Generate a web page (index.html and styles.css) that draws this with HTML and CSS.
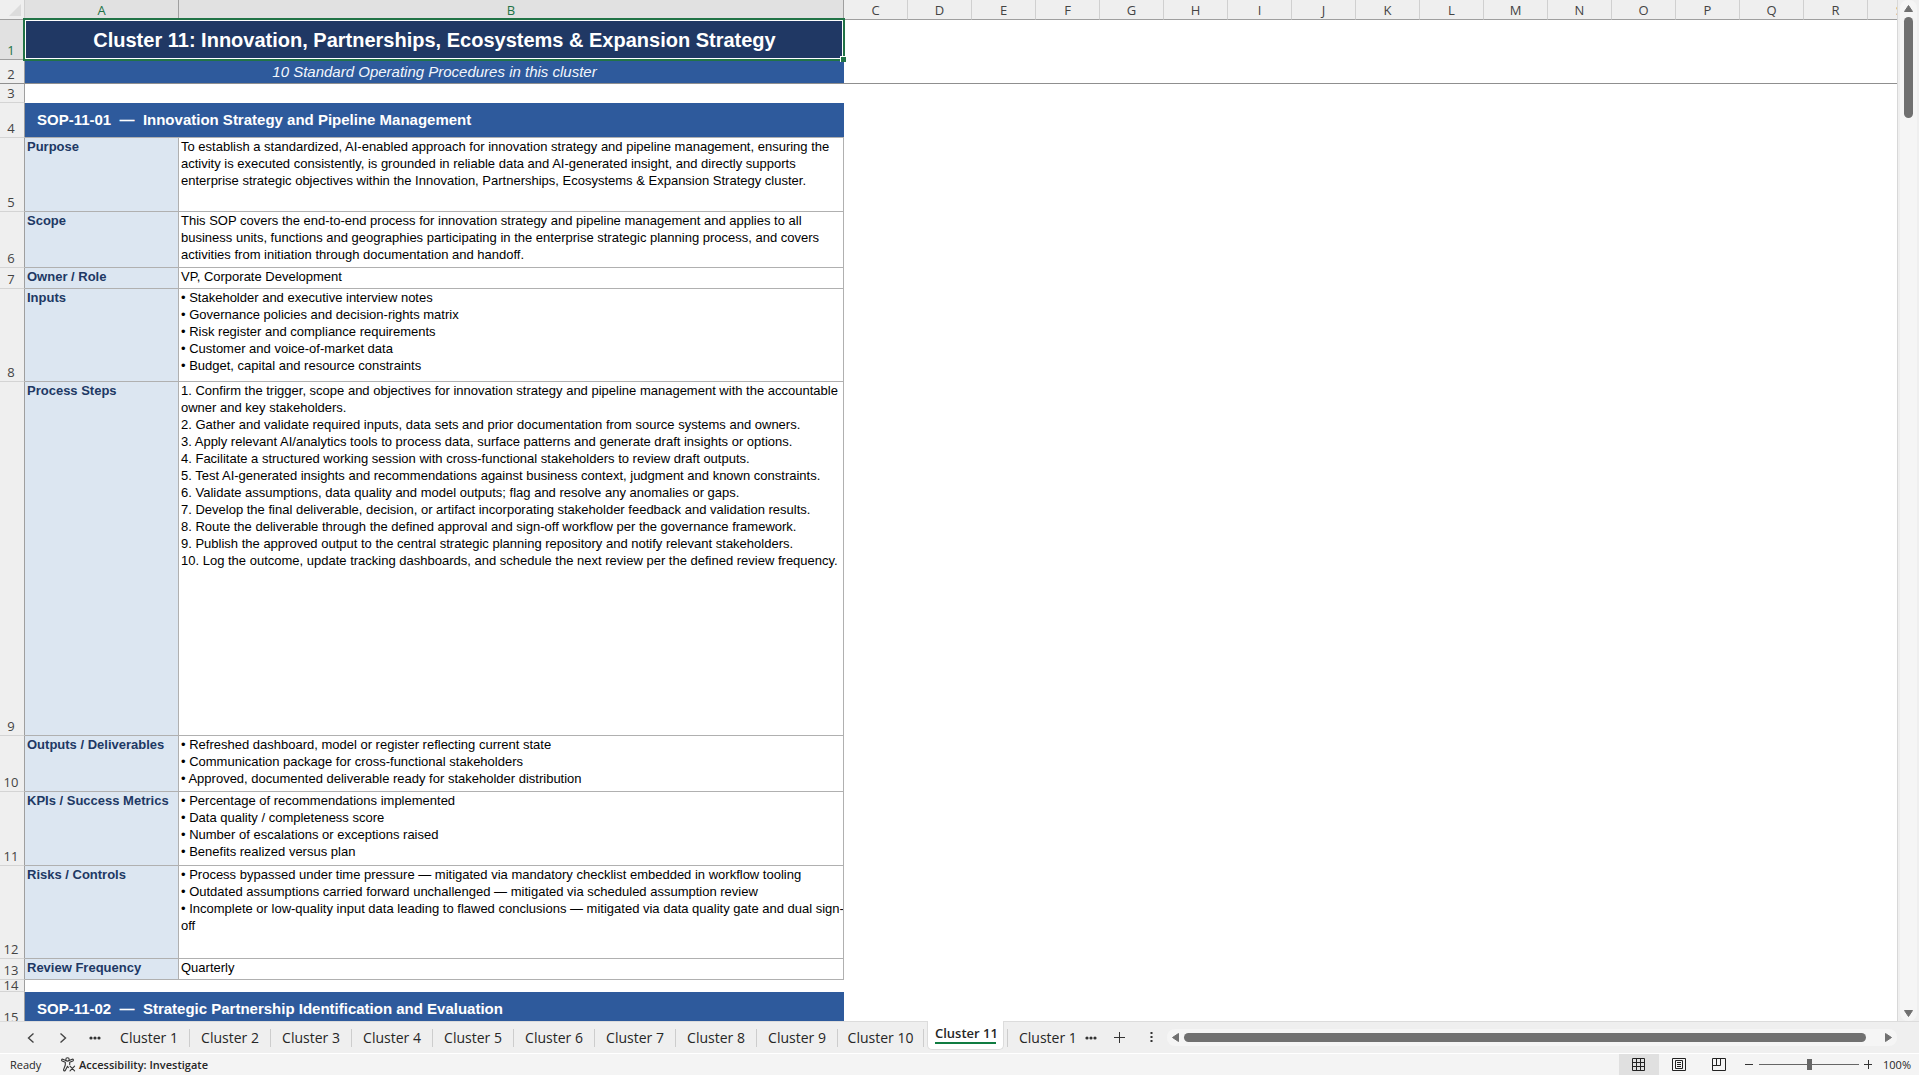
FILE: index.html
```html
<!DOCTYPE html>
<html lang="en">
<head>
<meta charset="utf-8">
<title>Cluster 11</title>
<link rel="stylesheet" href="styles.css">
</head>
<body>
<main class="workbook">
  <div class="viewport">
    <table class="sheet">
      <colgroup>
        <col class="col-head"><col class="col-a"><col class="col-b">
        <col class="col-std" span="17">
      </colgroup>
      <thead>
        <tr>
          <th class="corner"><svg width="12" height="12" viewBox="0 0 12 12"><path d="M12 0v12H0z" fill="#dcdcdc"/></svg></th>
          <th class="active">A</th><th class="active">B</th>
          <th>C</th><th>D</th><th>E</th><th>F</th><th>G</th><th>H</th><th>I</th><th>J</th><th>K</th><th>L</th><th>M</th><th>N</th><th>O</th><th>P</th><th>Q</th><th>R</th><th>S</th>
        </tr>
      </thead>
      <tbody>
        <tr class="h40"><th class="active">1</th><td class="title" colspan="2">Cluster 11: Innovation, Partnerships, Ecosystems &amp; Expansion Strategy<span class="selection"><i class="fill-handle"></i></span></td><td colspan="17"></td></tr>
        <tr class="h24 frozen"><th>2</th><td class="subtitle" colspan="2">10 Standard Operating Procedures in this cluster</td><td colspan="17"></td></tr>
        <tr class="h19"><th>3</th><td colspan="19"></td></tr>
        <tr class="h35"><th>4</th><td class="section" colspan="2">SOP-11-01&nbsp; —&nbsp; Innovation Strategy and Pipeline Management</td><td colspan="17"></td></tr>
        <tr class="h74"><th>5</th><td class="label">Purpose</td><td class="value">To establish a standardized, AI-enabled approach for innovation strategy and pipeline management, ensuring the<br>activity is executed consistently, is grounded in reliable data and AI-generated insight, and directly supports<br>enterprise strategic objectives within the Innovation, Partnerships, Ecosystems &amp; Expansion Strategy cluster.</td><td colspan="17"></td></tr>
        <tr class="h56"><th>6</th><td class="label">Scope</td><td class="value">This SOP covers the end-to-end process for innovation strategy and pipeline management and applies to all<br>business units, functions and geographies participating in the enterprise strategic planning process, and covers<br>activities from initiation through documentation and handoff.</td><td colspan="17"></td></tr>
        <tr class="h21"><th>7</th><td class="label">Owner / Role</td><td class="value">VP, Corporate Development</td><td colspan="17"></td></tr>
        <tr class="h93"><th>8</th><td class="label">Inputs</td><td class="value">• Stakeholder and executive interview notes<br>• Governance policies and decision-rights matrix<br>• Risk register and compliance requirements<br>• Customer and voice-of-market data<br>• Budget, capital and resource constraints</td><td colspan="17"></td></tr>
        <tr class="h354"><th>9</th><td class="label">Process Steps</td><td class="value">1. Confirm the trigger, scope and objectives for innovation strategy and pipeline management with the accountable<br>owner and key stakeholders.<br>2. Gather and validate required inputs, data sets and prior documentation from source systems and owners.<br>3. Apply relevant AI/analytics tools to process data, surface patterns and generate draft insights or options.<br>4. Facilitate a structured working session with cross-functional stakeholders to review draft outputs.<br>5. Test AI-generated insights and recommendations against business context, judgment and known constraints.<br>6. Validate assumptions, data quality and model outputs; flag and resolve any anomalies or gaps.<br>7. Develop the final deliverable, decision, or artifact incorporating stakeholder feedback and validation results.<br>8. Route the deliverable through the defined approval and sign-off workflow per the governance framework.<br>9. Publish the approved output to the central strategic planning repository and notify relevant stakeholders.<br>10. Log the outcome, update tracking dashboards, and schedule the next review per the defined review frequency.</td><td colspan="17"></td></tr>
        <tr class="h56"><th>10</th><td class="label">Outputs / Deliverables</td><td class="value">• Refreshed dashboard, model or register reflecting current state<br>• Communication package for cross-functional stakeholders<br>• Approved, documented deliverable ready for stakeholder distribution</td><td colspan="17"></td></tr>
        <tr class="h74"><th>11</th><td class="label">KPIs / Success Metrics</td><td class="value">• Percentage of recommendations implemented<br>• Data quality / completeness score<br>• Number of escalations or exceptions raised<br>• Benefits realized versus plan</td><td colspan="17"></td></tr>
        <tr class="h93"><th>12</th><td class="label">Risks / Controls</td><td class="value">• Process bypassed under time pressure — mitigated via mandatory checklist embedded in workflow tooling<br>• Outdated assumptions carried forward unchallenged — mitigated via scheduled assumption review<br>• Incomplete or low-quality input data leading to flawed conclusions — mitigated via data quality gate and dual sign-<br>off</td><td colspan="17"></td></tr>
        <tr class="h21"><th>13</th><td class="label">Review Frequency</td><td class="value">Quarterly</td><td colspan="17"></td></tr>
        <tr class="h12"><th><div class="squeezed">14</div></th><td colspan="19"></td></tr>
        <tr class="h35"><th>15</th><td class="section" colspan="2">SOP-11-02&nbsp; —&nbsp; Strategic Partnership Identification and Evaluation</td><td colspan="17"></td></tr>
      </tbody>
    </table>
  </div>
  <div class="vscroll">
    <div class="vtrack">
      <svg width="9" height="7" viewBox="0 0 9 7"><path d="M4.500 0.500L8.500 6.500H0.500z" fill="#707070" stroke="#707070" stroke-linejoin="round"/></svg>
      <div class="vthumb"></div>
      <svg class="vend" width="9" height="7" viewBox="0 0 9 7"><path d="M4.500 6.500L8.500 0.500H0.500z" fill="#707070" stroke="#707070" stroke-linejoin="round"/></svg>
    </div>
  </div>
</main>

<nav class="tabbar" aria-label="Sheets">
  <button class="nav" aria-label="Previous sheet"><svg width="8" height="12" viewBox="0 0 8 12"><path d="M6.500 1.500L1.500 6L6.500 10.500" fill="none" stroke="#444" stroke-width="1.400"/></svg></button>
  <button class="nav" aria-label="Next sheet"><svg width="8" height="12" viewBox="0 0 8 12"><path d="M1.500 1.500L6.500 6L1.500 10.500" fill="none" stroke="#444" stroke-width="1.400"/></svg></button>
  <button class="nav" aria-label="More sheets"><svg width="12" height="4" viewBox="0 0 12 4" fill="#333"><circle cx="2" cy="2" r="1.600"/><circle cx="6" cy="2" r="1.600"/><circle cx="10" cy="2" r="1.600"/></svg></button>
  <button class="tab">Cluster 1</button>
  <button class="tab">Cluster 2</button>
  <button class="tab">Cluster 3</button>
  <button class="tab">Cluster 4</button>
  <button class="tab">Cluster 5</button>
  <button class="tab">Cluster 6</button>
  <button class="tab">Cluster 7</button>
  <button class="tab">Cluster 8</button>
  <button class="tab">Cluster 9</button>
  <button class="tab wide">Cluster 10</button>
  <button class="tab current"><span>Cluster 11</span></button>
  <button class="tab last">Cluster 1</button>
  <button class="more" aria-label="More sheets"><svg width="12" height="4" viewBox="0 0 12 4" fill="#333"><circle cx="2" cy="2" r="1.600"/><circle cx="6" cy="2" r="1.600"/><circle cx="10" cy="2" r="1.600"/></svg></button>
  <button class="nav" aria-label="New sheet"><svg width="11" height="11" viewBox="0 0 11 11"><path d="M5.500 0v11M0 5.500h11" stroke="#333"/></svg></button>
  <button class="nav" aria-label="Resize"><svg width="3" height="11" viewBox="0 0 3 11"><path d="M0.500 0h2v2h-2zM0.500 4h2v2h-2zM0.500 8h2v2h-2z" fill="#333"/></svg></button>
  <div class="htrack">
    <svg width="7" height="9" viewBox="0 0 7 9"><path d="M0.500 4.500L6.500 0.500V8.500z" fill="#707070" stroke="#707070" stroke-linejoin="round"/></svg>
    <div class="hthumb"></div>
    <svg width="7" height="9" viewBox="0 0 7 9"><path d="M6.500 4.500L0.500 0.500V8.500z" fill="#707070" stroke="#707070" stroke-linejoin="round"/></svg>
  </div>
</nav>

<footer class="status">
  <span class="ready">Ready</span>
  <button class="access">
    <svg width="15" height="15" viewBox="0 0 15 15" fill="none" stroke="#333" stroke-width="1.100" stroke-linecap="round" stroke-linejoin="round"><circle cx="6.500" cy="2.400" r="1.700"/><path d="M4.800 3.400L1.800 2.200C.6 1.900.2 3.400 1.200 3.900L4.300 5.300V8L2.600 12.600C2.400 14 3.900 14.400 4.400 13.200L6.500 9.200L7.300 10.600M8.200 3.400L11.200 2.200C12.400 1.900 12.800 3.400 11.800 3.900L8.700 5.300V7.400"/><path d="M9 9.200L13.600 13.800M13.600 9.200L9 13.800"/></svg>
    Accessibility: Investigate
  </button>
  <div class="views">
    <button class="view on" aria-label="Normal"><svg width="14" height="14" viewBox="0 0 14 14" fill="none" stroke="#222"><path d="M.5.5h12v12H.5zM4.500.5v12M8.500.5v12M.5 4.500h12M.5 8.500h12"/></svg></button>
    <button class="view" aria-label="Page Layout"><svg width="14" height="14" viewBox="0 0 14 14" fill="none" stroke="#222"><path d="M.5.5h13v12H.5zM3.500 2.500h7v8h-7zM5 4.500h4M5 6.500h4M5 8.500h4"/></svg></button>
    <button class="view" aria-label="Page Break Preview"><svg width="14" height="14" viewBox="0 0 14 14" fill="none" stroke="#222"><path d="M.5.5h13v12H.5zM4.500.5v7M.5 7.500h8v-7"/></svg></button>
  </div>
  <button class="step" aria-label="Zoom out"><svg width="9" height="9" viewBox="0 0 9 9"><path d="M0 4.500h8" stroke="#333"/></svg></button>
  <input class="zoom" type="range" min="0" max="100" value="50" aria-label="Zoom">
  <button class="step" aria-label="Zoom in"><svg width="9" height="9" viewBox="0 0 9 9"><path d="M0 4.500h8M4.500 0v9" stroke="#333"/></svg></button>
  <button class="percent">100%</button>
</footer>
</body>
</html>
```
FILE: styles.css
```css
* { box-sizing: border-box; }

body {
  margin: 0;
  height: 100vh;
  display: flex;
  flex-direction: column;
  overflow: hidden;
  background: #efefef;
  color: #262626;
  font-family: "Open Sans", "Noto Sans", sans-serif;
}

button {
  margin: 0;
  padding: 0;
  border: 0;
  background: none;
  color: inherit;
  font: inherit;
  white-space: nowrap;
}

svg { display: block; flex: none; }

/* Grid */
.workbook {
  flex: 1;
  min-height: 0;
  display: flex;
}

.viewport {
  flex: 1;
  min-width: 0;
  overflow: hidden;
  background: #fff;
  border-right: 1px solid #d8d8d8;
}

.sheet {
  width: 1932px;
  table-layout: fixed;
  border-collapse: separate;
  border-spacing: 0;
}

.col-head { width: 25px; }
.col-a { width: 154px; }
.col-b { width: 665px; }
.col-std { width: 64px; }

.sheet th, .sheet td { padding: 0; }

.sheet th {
  background: #efefef;
  color: #444;
  font-size: 13px;
  font-weight: 400;
  line-height: 16px;
  text-align: center;
}

.sheet thead th {
  height: 20px;
  padding-top: 1px;
  border-right: 1px solid #d0d0d0;
  border-bottom: 1px solid #9f9f9f;
}

.sheet tbody th {
  padding: 0 2px 1px 0;
  vertical-align: bottom;
  border-right: 1px solid #9f9f9f;
  border-bottom: 1px solid #d4d4d4;
}

.sheet th.active {
  background: #e1e1e1;
  color: #217346;
  border-color: #9f9f9f;
}

.sheet .corner { padding: 4px 3px 3px 9px; }

.h12 { height: 12px; }
.h19 { height: 19px; }
.h21 { height: 21px; }
.h24 { height: 24px; }
.h35 { height: 35px; }
.h40 { height: 40px; }
.h56 { height: 56px; }
.h74 { height: 74px; }
.h93 { height: 93px; }
.h354 { height: 354px; }

.squeezed {
  height: 10px;
  line-height: 10px;
}

.frozen th, .frozen td { border-bottom: 1px solid #8f8f8f; }
.sheet .frozen th { border-bottom-color: #8f8f8f; }

.title, .subtitle, .section, .label, .value {
  font-family: "Liberation Sans", Arial, sans-serif;
  white-space: nowrap;
}

.title {
  position: relative;
  background: #203864;
  color: #fff;
  font-size: 20px;
  font-weight: 700;
  line-height: 24px;
  text-align: center;
}

.subtitle {
  background: #2e5a9c;
  color: #f2f6fc;
  font-size: 15px;
  font-style: italic;
  line-height: 18px;
  text-align: center;
}

.sheet .section {
  padding-left: 12px;
  background: #2e5a9c;
  color: #fff;
  font-size: 15px;
  font-weight: 700;
  line-height: 18px;
  border-bottom: 1px solid #b0b0b0;
}

.sheet .label, .sheet .value {
  padding-left: 2px;
  font-size: 13px;
  line-height: 17px;
  vertical-align: top;
  border-right: 1px solid #b0b0b0;
  border-bottom: 1px solid #b0b0b0;
}

.label {
  background: #dce6f1;
  color: #203864;
  font-weight: 700;
}

.value {
  overflow: hidden;
  color: #000;
}

.selection {
  position: absolute;
  inset: -2px -1px -1px -2px;
  border: 2px solid #217346;
  box-shadow: inset 0 0 0 1px #fff;
}

.fill-handle {
  position: absolute;
  right: -3px;
  bottom: -3px;
  width: 6px;
  height: 6px;
  background: #217346;
  border-top: 1px solid #fff;
  border-left: 1px solid #fff;
}

/* Scroll bars */
.vscroll {
  width: 21px;
  padding: 0 2px;
  display: flex;
}

.vtrack {
  flex: 1;
  padding: 5px 0 4px;
  display: flex;
  flex-direction: column;
  align-items: center;
  gap: 5px;
  border-radius: 8px;
  background: #f5f5f5;
}

.vthumb {
  width: 9px;
  height: 10%;
  border-radius: 5px;
  background: #707070;
}

.vend { margin-top: auto; }

.htrack {
  flex: 1;
  height: 17px;
  margin: 7px 22px 0 0;
  padding: 0 5px;
  display: flex;
  align-items: center;
  gap: 5px;
  border-radius: 8px;
  background: #f5f5f5;
}

.hthumb {
  flex: 1;
  height: 9px;
  margin-right: 14px;
  border-radius: 5px;
  background: #707070;
}

/* Sheet tabs */
.tabbar {
  height: 33px;
  display: flex;
  align-items: flex-start;
  border-top: 1px solid #dcdcdc;
  border-bottom: 1px solid #fff;
  font-size: 14px;
  line-height: 18px;
}

.nav {
  width: 32px;
  height: 31px;
  display: flex;
  align-items: center;
  justify-content: center;
}

.nav:first-child { margin-left: 15px; }

.tab {
  width: 81px;
  height: 18px;
  margin-top: 7px;
  border-right: 1px solid #cdcdcd;
}

.nav + .tab { margin-left: -2px; }

.tab.wide { width: 86px; }

.tab.current {
  width: 77px;
  height: 29px;
  margin: -1px 3px 0;
  padding-bottom: 3px;
  background: #fff;
  border: 1px solid #dcdcdc;
  border-top: 0;
  border-radius: 0 0 5px 5px;
  font-size: 13px;
  font-weight: 600;
}

.tab.current span {
  display: block;
  margin: 0 7px;
  border-bottom: 2px solid #107c41;
}

.tab.last {
  width: 72px;
  padding-left: 11px;
  border-right: 0;
  border-left: 1px solid #cdcdcd;
  text-align: left;
}

.more {
  width: 24px;
  height: 31px;
  display: grid;
  place-items: center;
}

/* Status bar */
.status {
  height: 21px;
  padding: 0 8px 0 10px;
  display: flex;
  align-items: center;
  background: #f4f4f4;
  font-size: 11px;
  line-height: 16px;
}

.ready { width: 51px; }

.access {
  display: flex;
  align-items: center;
  gap: 3px;
  font-weight: 600;
}

.views {
  margin-left: auto;
  display: flex;
}

.view {
  width: 40px;
  height: 21px;
  display: grid;
  place-items: center;
}

.view.on { background: #e0e0e0; }

.step {
  width: 9px;
  margin: 0 5px;
}

.views + .step { margin-left: 6px; }

.zoom {
  appearance: none;
  width: 100px;
  height: 11px;
  margin: 0;
  background: linear-gradient(#666, #666) center / 100% 1px no-repeat;
}

.zoom::-webkit-slider-thumb {
  appearance: none;
  width: 5px;
  height: 11px;
  background: #666;
}

.percent {
  width: 33px;
  text-align: right;
}
```
